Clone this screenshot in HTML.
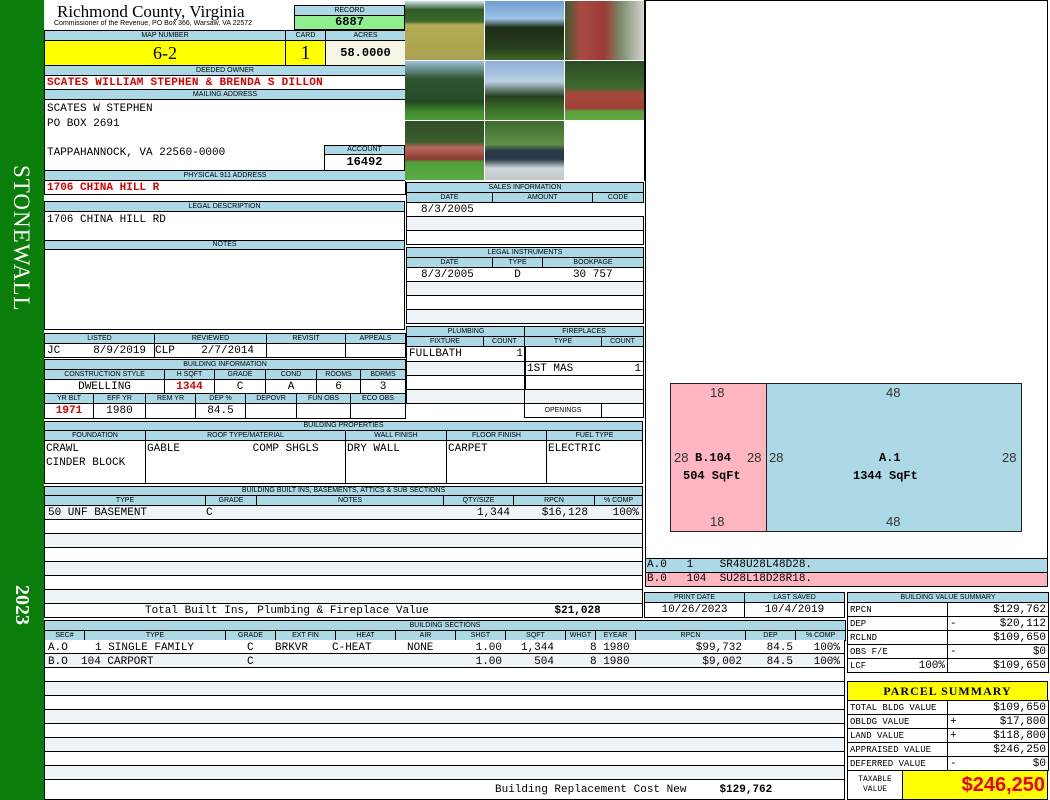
<!DOCTYPE html>
<html><head><meta charset="utf-8"><style>
*{box-sizing:border-box;margin:0;padding:0}
body{width:1050px;height:800px;overflow:hidden;background:#fff;position:relative;font-family:"Liberation Mono",monospace;font-size:11px;color:#000}
.a{position:absolute}
.h{position:absolute;background:#add8e6;border:1px solid #000;font:7px "Liberation Sans",sans-serif;text-align:center;line-height:8px;overflow:hidden;white-space:nowrap}
table{position:absolute;border-collapse:collapse;table-layout:fixed}
td{border:1px solid #000;padding:0 2px;white-space:nowrap;overflow:hidden;font-size:11px;line-height:12px}
td.t{background:#add8e6;font:7px "Liberation Sans",sans-serif;text-align:center;line-height:8px;padding:0}
tr.alt td{background:#eef3f8}
.r{text-align:right}.c{text-align:center}
.red{color:#d00;font-weight:bold}
.box{position:absolute;border:1px solid #000;background:#fff}
.sr{position:absolute;white-space:pre;line-height:14px}
</style></head><body>
<div class="a" style="left:0;top:0;width:44px;height:800px;background:#0a7d0a"></div>
<div class="a" style="left:22px;top:165px;width:0;height:0"><div style="position:absolute;transform:rotate(90deg);transform-origin:0 0;left:12px;top:0;color:#fff;font:23px 'Liberation Serif',serif;white-space:nowrap;letter-spacing:1px">STONEWALL</div></div>
<div class="a" style="left:22px;top:585px;width:0;height:0"><div style="position:absolute;transform:rotate(90deg);transform-origin:0 0;left:11px;top:0;color:#fff;font:bold 20px 'Liberation Serif',serif;white-space:nowrap">2023</div></div>

<!-- header -->
<div class="a" style="left:57px;top:2px;font:17px 'Liberation Serif',serif;line-height:20px">Richmond County, Virginia</div>
<div class="a" style="left:54px;top:20px;font:7px 'Liberation Sans',sans-serif">Commissioner of the Revenue, PO Box 366, Warsaw, VA 22572</div>
<div class="h" style="left:294px;top:5px;width:111px;height:11px;line-height:9px">RECORD</div>
<div class="a" style="left:294px;top:15px;width:111px;height:15px;background:#90ee90;border:1px solid #000;text-align:center;font-weight:bold;font-size:12px;line-height:13px">6887</div>
<table style="left:44px;top:30px;width:361px"><colgroup><col style="width:241px"><col style="width:40px"><col style="width:80px"></colgroup>
<tr style="height:10px"><td class="t">MAP NUMBER</td><td class="t">CARD</td><td class="t">ACRES</td></tr>
<tr style="height:25px"><td class="c" style="background:#ffff00;font:18px 'Liberation Serif',serif">6-2</td><td class="c" style="background:#ffff00;font:20px 'Liberation Serif',serif">1</td><td class="c" style="background:#f7f5e6;font-weight:bold;font-size:12px">58.0000</td></tr>
<tr style="height:10px"><td class="t" colspan="3">DEEDED OWNER</td></tr>
<tr style="height:14px"><td colspan="3" class="red" style="letter-spacing:.3px">SCATES WILLIAM STEPHEN &amp; BRENDA S DILLON</td></tr>
<tr style="height:10px"><td class="t" colspan="3">MAILING ADDRESS</td></tr>
<tr style="height:71px"><td colspan="3"></td></tr>
<tr style="height:10px"><td class="t" colspan="3">PHYSICAL 911 ADDRESS</td></tr>
<tr style="height:14px"><td colspan="3" class="red">1706 CHINA HILL R</td></tr>
</table>
<div class="a" style="left:47px;top:102px;line-height:15px">SCATES W STEPHEN<br>PO BOX 2691</div>
<div class="a" style="left:47px;top:147px">TAPPAHANNOCK, VA 22560-0000</div>
<div class="h" style="left:324px;top:145px;width:81px;height:10px">ACCOUNT</div>
<div class="box" style="left:324px;top:154px;width:81px;height:17px;text-align:center;font-weight:bold;font-size:12px;line-height:15px">16492</div>

<table style="left:44px;top:201px;width:361px">
<tr style="height:10px"><td class="t">LEGAL DESCRIPTION</td></tr>
<tr style="height:29px"><td style="vertical-align:top;padding-top:2px">1706 CHINA HILL RD</td></tr>
<tr style="height:9px"><td class="t">NOTES</td></tr>
<tr style="height:80px"><td></td></tr></table>

<table style="left:44px;top:333px;width:361px"><colgroup><col style="width:110px"><col style="width:112px"><col style="width:79px"><col style="width:60px"></colgroup>
<tr style="height:10px"><td class="t">LISTED</td><td class="t">REVIEWED</td><td class="t">REVISIT</td><td class="t">APPEALS</td></tr>
<tr style="height:14px"><td>JC&nbsp;&nbsp;&nbsp;&nbsp;&nbsp;8/9/2019</td><td style="padding:0">CLP&nbsp;&nbsp;&nbsp;&nbsp;2/7/2014</td><td></td><td></td></tr></table>

<table style="left:44px;top:359px;width:361px"><colgroup><col style="width:120px"><col style="width:50px"><col style="width:51px"><col style="width:51px"><col style="width:44px"><col style="width:45px"></colgroup>
<tr style="height:10px"><td class="t" colspan="6">BUILDING INFORMATION</td></tr>
<tr style="height:10px"><td class="t">CONSTRUCTION STYLE</td><td class="t">H SQFT</td><td class="t">GRADE</td><td class="t">COND</td><td class="t">ROOMS</td><td class="t">BDRMS</td></tr>
<tr style="height:14px"><td class="c">DWELLING</td><td class="c red">1344</td><td class="c">C</td><td class="c">A</td><td class="c">6</td><td class="c">3</td></tr></table>
<table style="left:44px;top:393px;width:361px"><colgroup><col style="width:49px"><col style="width:52px"><col style="width:50px"><col style="width:50px"><col style="width:51px"><col style="width:54px"><col style="width:55px"></colgroup>
<tr style="height:10px"><td class="t">YR BLT</td><td class="t">EFF YR</td><td class="t">REM YR</td><td class="t">DEP %</td><td class="t">DEPOVR</td><td class="t">FUN OBS</td><td class="t">ECO OBS</td></tr>
<tr style="height:15px"><td class="c red">1971</td><td class="c">1980</td><td></td><td class="c">84.5</td><td></td><td></td><td></td></tr></table>

<!-- photos -->
<div class="a" style="left:405px;top:0;width:240px;height:181px;background:#fff;border-right:1px solid #000"></div>
<div class="a" style="left:405px;top:1px;width:79px;height:59px;background:linear-gradient(#cfe4f0 0%,#2e5a26 15%,#3b6b2c 35%,#b5a956 40%,#a9a24e 100%)"></div>
<div class="a" style="left:485px;top:1px;width:79px;height:59px;background:linear-gradient(#6f9fd0 0%,#9cc3e6 30%,#1e2d16 45%,#263d1a 80%,#3f6a2a 100%)"></div>
<div class="a" style="left:565px;top:1px;width:79px;height:59px;background:linear-gradient(90deg,#3d5a2e 0%,#a94a44 20%,#9c3a36 50%,#7a8a6a 70%,#d4d4d0 100%)"></div>
<div class="a" style="left:405px;top:61px;width:79px;height:59px;background:linear-gradient(#9bbfd8 0%,#2f5530 30%,#244a26 70%,#3f8a2e 85%,#4c9a36 100%)"></div>
<div class="a" style="left:485px;top:61px;width:79px;height:59px;background:linear-gradient(#8fb0d8 0%,#b9cfe4 35%,#25401e 60%,#3a6b2a 80%,#4a8a34 100%)"></div>
<div class="a" style="left:565px;top:61px;width:79px;height:59px;background:linear-gradient(#2b4a24 0%,#3c6a2c 45%,#a84a3e 55%,#a04038 80%,#5aa03e 85%,#60a840 100%)"></div>
<div class="a" style="left:405px;top:121px;width:79px;height:59px;background:linear-gradient(#2e4f26 0%,#3a5d2c 35%,#b8675a 45%,#8a3b32 65%,#4fa03a 70%,#5aab40 100%)"></div>
<div class="a" style="left:485px;top:121px;width:79px;height:59px;background:linear-gradient(#3d6a2c 0%,#5f9046 40%,#2b3a4a 50%,#2b3a4a 65%,#cfd6d8 80%,#c0c8c8 100%)"></div>

<!-- sales -->
<table style="left:406px;top:182px;width:237px"><colgroup><col style="width:86px"><col style="width:100px"><col style="width:51px"></colgroup>
<tr style="height:10px"><td class="t" colspan="3">SALES INFORMATION</td></tr>
<tr style="height:10px"><td class="t">DATE</td><td class="t">AMOUNT</td><td class="t">CODE</td></tr>
<tr style="height:14px"><td style="border-right:0;padding-left:14px" colspan="3">8/3/2005</td></tr>
<tr class="alt" style="height:14px"><td colspan="3"></td></tr>
<tr style="height:14px"><td colspan="3"></td></tr></table>
<table style="left:406px;top:247px;width:237px"><colgroup><col style="width:86px"><col style="width:50px"><col style="width:101px"></colgroup>
<tr style="height:10px"><td class="t" colspan="3">LEGAL INSTRUMENTS</td></tr>
<tr style="height:10px"><td class="t">DATE</td><td class="t">TYPE</td><td class="t">BOOKPAGE</td></tr>
<tr style="height:14px"><td style="padding-left:14px;border-right:0">8/3/2005</td><td class="c" style="border-left:0;border-right:0">D</td><td class="c" style="border-left:0">30 757</td></tr>
<tr class="alt" style="height:14px"><td colspan="3"></td></tr>
<tr style="height:14px"><td colspan="3"></td></tr>
<tr class="alt" style="height:14px"><td colspan="3"></td></tr></table>

<table style="left:406px;top:326px;width:119px"><colgroup><col style="width:77px"><col style="width:42px"></colgroup>
<tr style="height:10px"><td class="t" colspan="2">PLUMBING</td></tr>
<tr style="height:10px"><td class="t">FIXTURE</td><td class="t">COUNT</td></tr>
<tr style="height:15px"><td style="border-right:0">FULLBATH</td><td class="r" style="border-left:0">1</td></tr>
<tr class="alt" style="height:14px"><td colspan="2"></td></tr>
<tr style="height:14px"><td colspan="2"></td></tr>
<tr class="alt" style="height:14px"><td colspan="2"></td></tr></table>
<table style="left:524px;top:326px;width:119px"><colgroup><col style="width:77px"><col style="width:42px"></colgroup>
<tr style="height:10px"><td class="t" colspan="2">FIREPLACES</td></tr>
<tr style="height:10px"><td class="t">TYPE</td><td class="t">COUNT</td></tr>
<tr style="height:15px"><td colspan="2"></td></tr>
<tr style="height:14px"><td style="border-right:0">1ST MAS</td><td class="r" style="border-left:0">1</td></tr>
<tr style="height:14px"><td colspan="2"></td></tr>
<tr class="alt" style="height:14px"><td colspan="2"></td></tr>
<tr style="height:14px"><td class="t" style="background:#fff">OPENINGS</td><td></td></tr></table>

<!-- building properties -->
<table style="left:44px;top:421px;width:598px"><colgroup><col style="width:101px"><col style="width:200px"><col style="width:101px"><col style="width:100px"><col style="width:96px"></colgroup>
<tr style="height:9px"><td class="t" colspan="5">BUILDING PROPERTIES</td></tr>
<tr style="height:10px"><td class="t">FOUNDATION</td><td class="t">ROOF TYPE/MATERIAL</td><td class="t">WALL FINISH</td><td class="t">FLOOR FINISH</td><td class="t">FUEL TYPE</td></tr>
<tr style="height:43px"><td style="vertical-align:top;padding:1px 1px;line-height:14px">CRAWL<br>CINDER BLOCK</td><td style="vertical-align:top;padding:1px 1px;line-height:14px">GABLE&nbsp;&nbsp;&nbsp;&nbsp;&nbsp;&nbsp;&nbsp;&nbsp;&nbsp;&nbsp;&nbsp;COMP SHGLS</td><td style="vertical-align:top;padding:1px 1px;line-height:14px">DRY WALL</td><td style="vertical-align:top;padding:1px 1px;line-height:14px">CARPET</td><td style="vertical-align:top;padding:1px 1px;line-height:14px">ELECTRIC</td></tr></table>

<!-- built ins -->
<table style="left:44px;top:486px;width:598px"><colgroup><col style="width:161px"><col style="width:51px"><col style="width:187px"><col style="width:70px"><col style="width:81px"><col style="width:48px"></colgroup>
<tr style="height:9px"><td class="t" colspan="6">BUILDING BUILT INS, BASEMENTS, ATTICS &amp; SUB SECTIONS</td></tr>
<tr style="height:10px"><td class="t">TYPE</td><td class="t">GRADE</td><td class="t">NOTES</td><td class="t">QTY/SIZE</td><td class="t">RPCN</td><td class="t">% COMP</td></tr>
<tr class="alt" style="height:14px"><td colspan="6"></td></tr>
<tr style="height:14px"><td colspan="6"></td></tr>
<tr class="alt" style="height:14px"><td colspan="6"></td></tr>
<tr style="height:14px"><td colspan="6"></td></tr>
<tr class="alt" style="height:14px"><td colspan="6"></td></tr>
<tr style="height:14px"><td colspan="6"></td></tr>
<tr class="alt" style="height:14px"><td colspan="6"></td></tr>
<tr style="height:14px"><td colspan="6" style="padding-left:100px">Total Built Ins, Plumbing &amp; Fireplace Value<span style="position:absolute;left:510px;font-weight:bold">$21,028</span></td></tr></table>
<div class="sr" style="left:48px;top:506px">50 UNF BASEMENT</div>
<div class="sr" style="left:206px;top:506px">C</div>
<div class="sr" style="left:460px;top:506px;width:50px;text-align:right">1,344</div>
<div class="sr" style="left:520px;top:506px;width:68px;text-align:right">$16,128</div>
<div class="sr" style="left:600px;top:506px;width:39px;text-align:right">100%</div>

<!-- building sections -->
<table style="left:44px;top:620px;width:801px"><colgroup><col style="width:40px"><col style="width:141px"><col style="width:50px"><col style="width:60px"><col style="width:60px"><col style="width:60px"><col style="width:50px"><col style="width:60px"><col style="width:30px"><col style="width:40px"><col style="width:110px"><col style="width:50px"><col style="width:50px"></colgroup>
<tr style="height:10px"><td class="t" colspan="13">BUILDING SECTIONS</td></tr>
<tr style="height:10px"><td class="t">SEC#</td><td class="t">TYPE</td><td class="t">GRADE</td><td class="t">EXT FIN</td><td class="t">HEAT</td><td class="t">AIR</td><td class="t">SHGT</td><td class="t">SQFT</td><td class="t">WHGT</td><td class="t">EYEAR</td><td class="t">RPCN</td><td class="t">DEP</td><td class="t">% COMP</td></tr>
</table>
<div class="a" style="left:44px;top:640px;width:801px;height:160px;border:1px solid #000;border-top:0;background:repeating-linear-gradient(#fff 0,#fff 13px,#000 13px,#000 14px,#eef3f8 14px,#eef3f8 27px,#000 27px,#000 28px)"></div>
<div class="sr" style="left:48px;top:641px">A.O</div><div class="sr" style="left:95px;top:641px">1 SINGLE FAMILY</div>
<div class="sr" style="left:247px;top:641px">C</div><div class="sr" style="left:275px;top:641px">BRKVR</div>
<div class="sr" style="left:332px;top:641px">C-HEAT</div><div class="sr" style="left:407px;top:641px">NONE</div>
<div class="sr" style="left:450px;top:641px;width:52px;text-align:right">1.00</div>
<div class="sr" style="left:510px;top:641px;width:44px;text-align:right">1,344</div>
<div class="sr" style="left:590px;top:641px">8 1980</div>
<div class="sr" style="left:680px;top:641px;width:62px;text-align:right">$99,732</div>
<div class="sr" style="left:750px;top:641px;width:43px;text-align:right">84.5</div>
<div class="sr" style="left:800px;top:641px;width:40px;text-align:right">100%</div>
<div class="sr" style="left:48px;top:655px">B.O</div><div class="sr" style="left:81px;top:655px">104 CARPORT</div>
<div class="sr" style="left:247px;top:655px">C</div>
<div class="sr" style="left:450px;top:655px;width:52px;text-align:right">1.00</div>
<div class="sr" style="left:510px;top:655px;width:44px;text-align:right">504</div>
<div class="sr" style="left:590px;top:655px">8 1980</div>
<div class="sr" style="left:680px;top:655px;width:62px;text-align:right">$9,002</div>
<div class="sr" style="left:750px;top:655px;width:43px;text-align:right">84.5</div>
<div class="sr" style="left:800px;top:655px;width:40px;text-align:right">100%</div>
<div class="a" style="left:45px;top:782px;width:799px;height:17px;background:#fff"></div>
<div class="a" style="left:495px;top:784px;white-space:pre">Building Replacement Cost New     <b>$129,762</b></div>

<!-- right panel -->
<div class="box" style="left:645px;top:0;width:403px;height:559px"></div>
<div class="a" style="left:670px;top:383px;width:97px;height:149px;background:#ffb6c1;border:1px solid #222"></div>
<div class="a" style="left:766px;top:383px;width:256px;height:149px;background:#add8e6;border:1px solid #222"></div>
<div class="a" style="font:13px 'Liberation Sans',sans-serif;color:#333;left:710px;top:385px">18</div>
<div class="a" style="font:13px 'Liberation Sans',sans-serif;color:#333;left:710px;top:514px">18</div>
<div class="a" style="font:13px 'Liberation Sans',sans-serif;color:#333;left:886px;top:385px">48</div>
<div class="a" style="font:13px 'Liberation Sans',sans-serif;color:#333;left:886px;top:514px">48</div>
<div class="a" style="font:13px 'Liberation Sans',sans-serif;color:#333;left:674px;top:450px">28</div>
<div class="a" style="font:13px 'Liberation Sans',sans-serif;color:#333;left:747px;top:450px">28</div>
<div class="a" style="font:13px 'Liberation Sans',sans-serif;color:#333;left:769px;top:450px">28</div>
<div class="a" style="font:13px 'Liberation Sans',sans-serif;color:#333;left:1002px;top:450px">28</div>
<div class="a" style="left:695px;top:451px;font-weight:bold;font-size:12px">B.104</div>
<div class="a" style="left:683px;top:469px;font-weight:bold;font-size:12px">504 SqFt</div>
<div class="a" style="left:879px;top:451px;font-weight:bold;font-size:12px">A.1</div>
<div class="a" style="left:853px;top:469px;font-weight:bold;font-size:12px">1344 SqFt</div>
<div class="a" style="left:645px;top:558px;width:403px;height:15px;background:#add8e6;border:1px solid #000;white-space:pre;padding-left:1px;line-height:13px">A.0   1    SR48U28L48D28.</div>
<div class="a" style="left:645px;top:572px;width:403px;height:15px;background:#ffb6c1;border:1px solid #000;white-space:pre;padding-left:1px;line-height:13px">B.0   104  SU28L18D28R18.</div>

<table style="left:644px;top:592px;width:200px"><colgroup><col style="width:100px"><col style="width:100px"></colgroup>
<tr style="height:10px"><td class="t">PRINT DATE</td><td class="t">LAST SAVED</td></tr>
<tr style="height:15px"><td class="c">10/26/2023</td><td class="c">10/4/2019</td></tr></table>

<table style="left:847px;top:592px;width:201px"><colgroup><col style="width:100px"><col style="width:101px"></colgroup>
<tr style="height:10px"><td class="t" colspan="2">BUILDING VALUE SUMMARY</td></tr>
<tr style="height:14px"><td style="font-size:9px">RPCN</td><td class="r">$129,762</td></tr>
<tr style="height:14px"><td style="font-size:9px">DEP</td><td class="r"><span style="float:left">-</span>$20,112</td></tr>
<tr style="height:14px"><td style="font-size:9px">RCLND</td><td class="r">$109,650</td></tr>
<tr style="height:14px"><td style="font-size:9px">OBS F/E</td><td class="r"><span style="float:left">-</span>$0</td></tr>
<tr style="height:14px"><td style="font-size:9px">LCF<span style="float:right;font-size:11px">100%</span></td><td class="r">$109,650</td></tr></table>

<div class="a" style="left:847px;top:681px;width:201px;height:20px;background:#ffff00;border:1px solid #000;text-align:center;font:bold 12px 'Liberation Serif',serif;line-height:18px;letter-spacing:1px">PARCEL SUMMARY</div>
<table style="left:847px;top:700px;width:201px"><colgroup><col style="width:100px"><col style="width:101px"></colgroup>
<tr style="height:14px"><td style="font-size:9px">TOTAL BLDG VALUE</td><td class="r">$109,650</td></tr>
<tr style="height:14px"><td style="font-size:9px">OBLDG VALUE</td><td class="r"><span style="float:left">+</span>$17,800</td></tr>
<tr style="height:14px"><td style="font-size:9px">LAND VALUE</td><td class="r"><span style="float:left">+</span>$118,800</td></tr>
<tr style="height:14px"><td style="font-size:9px">APPRAISED VALUE</td><td class="r">$246,250</td></tr>
<tr style="height:14px"><td style="font-size:9px">DEFERRED VALUE</td><td class="r"><span style="float:left">-</span>$0</td></tr></table>
<div class="box" style="left:847px;top:770px;width:56px;height:30px;font-size:8px;text-align:center;line-height:10px;padding-top:4px">TAXABLE<br>VALUE</div>
<div class="a" style="left:902px;top:770px;width:146px;height:30px;background:#ffff00;border:1px solid #000;text-align:right;color:#e00;font:bold 20px 'Liberation Sans',sans-serif;line-height:28px;padding-right:2px">$246,250</div>
</body></html>
